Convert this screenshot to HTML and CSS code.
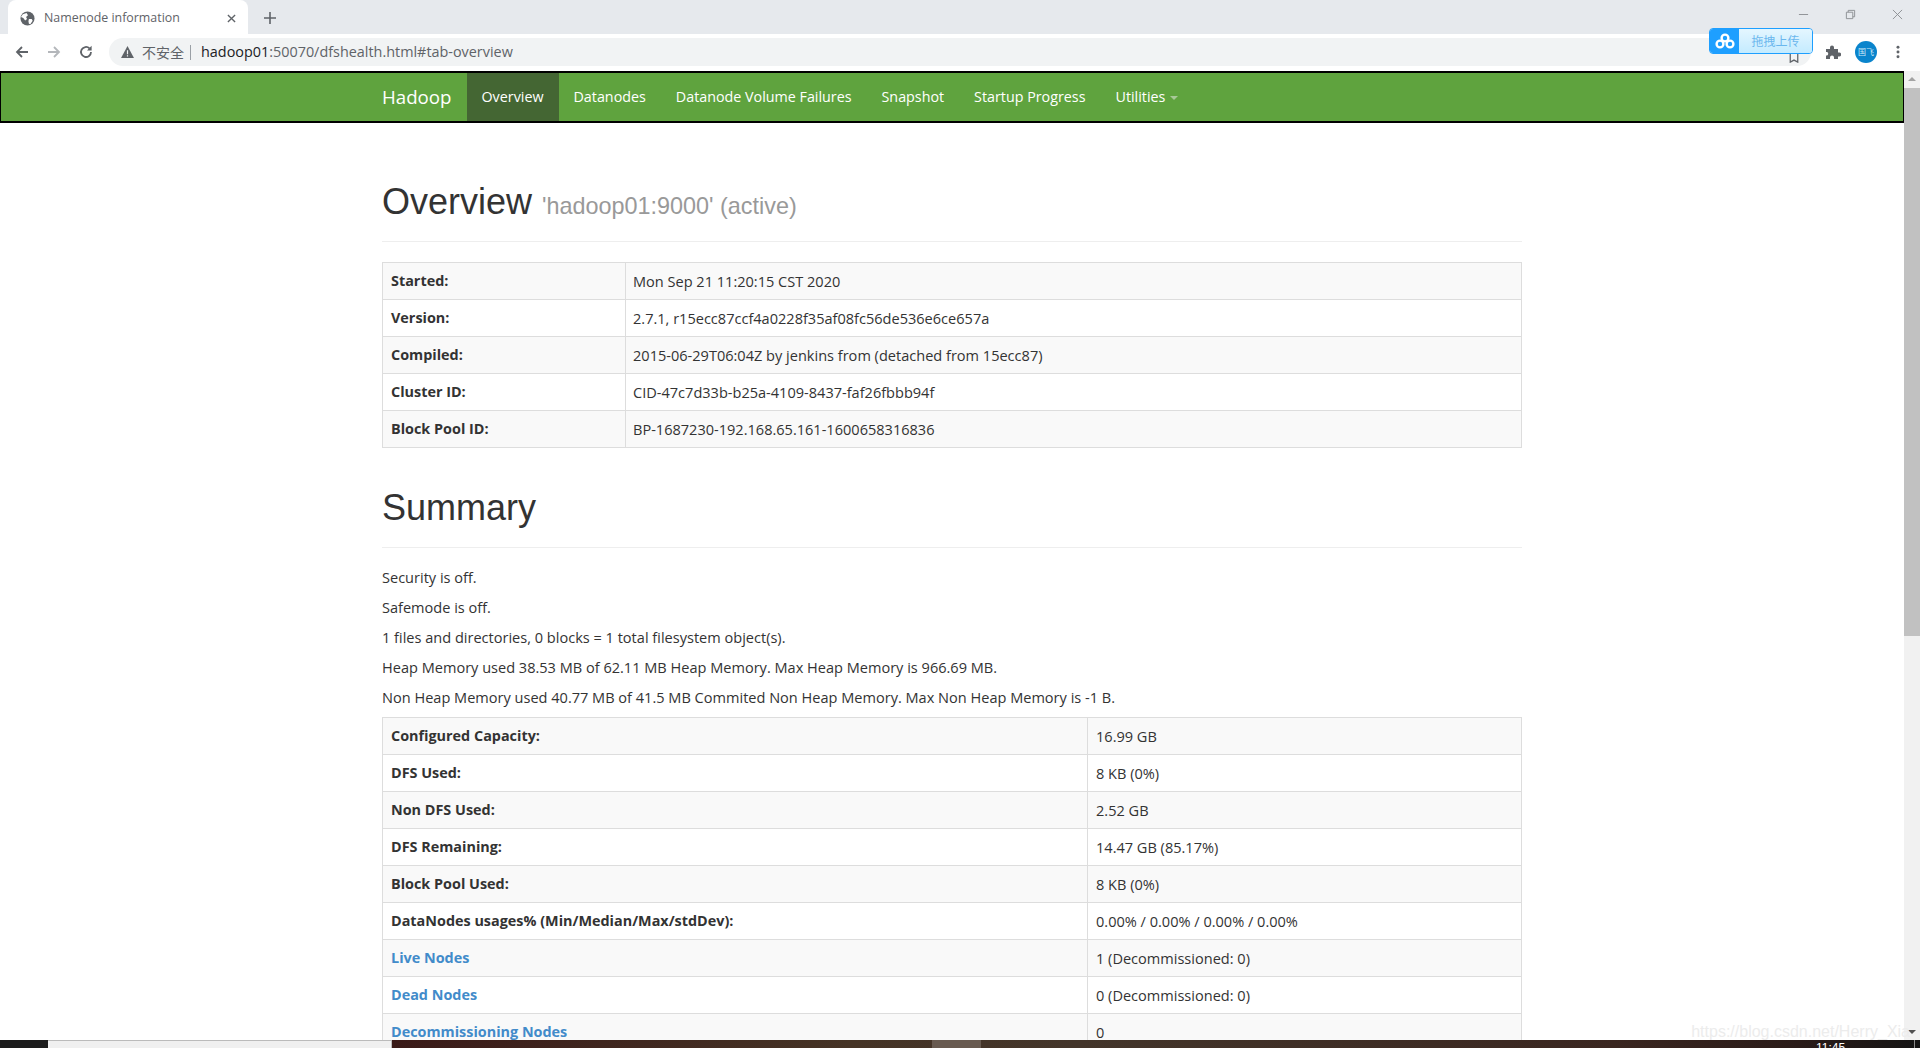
FILE: index.html
```html
<!DOCTYPE html>
<html lang="en">
<head>
<meta charset="utf-8">
<title>Namenode information</title>
<link rel="stylesheet" href="styles.css">
</head>
<body>
<div class="tabstrip">
  <div class="tab">
    <svg class="favicon" viewBox="0 0 16 16"><circle cx="8" cy="8" r="7.5" fill="#5f6368"/><path d="M3 3.5 7 2 8.5 4.5 6.5 6.5 7.5 8.5 5.5 10 3.5 7.5 1 6.5ZM9.5 8.5 12.5 8.5 13.5 10.5 11 14 9.5 13.5 9 11Z" fill="#fff"/></svg>
    <span class="tab-title">Namenode information</span>
    <svg class="tab-close" viewBox="0 0 10 10"><path d="M1 1 9 9M9 1 1 9" stroke="#5f6368" stroke-width="1.5"/></svg>
  </div>
  <svg class="new-tab" viewBox="0 0 12 12"><path d="M6 0V12M0 6H12" stroke="#5f6368" stroke-width="1.6"/></svg>
  <div class="window-controls">
    <svg viewBox="0 0 12 12"><path d="M1 6H11" stroke="#8a8d91" stroke-width="1"/></svg>
    <svg viewBox="0 0 12 12"><path d="M1.5 3.5H8.5V10.5H1.5ZM3.5 3.5V1.5H10.5V8.5H8.5" fill="none" stroke="#8a8d91" stroke-width="1"/></svg>
    <svg viewBox="0 0 12 12"><path d="M1 1 11 11M11 1 1 11" stroke="#8a8d91" stroke-width="1"/></svg>
  </div>
</div>
<div class="toolbar">
  <svg class="nav-icon" viewBox="0 0 16 16"><path d="M14 8H3M8 3 3 8 8 13" fill="none" stroke="#5f6368" stroke-width="1.8"/></svg>
  <svg class="nav-icon" viewBox="0 0 16 16"><path d="M2 8H13M8 3 13 8 8 13" fill="none" stroke="#b4b7bb" stroke-width="1.8"/></svg>
  <svg class="nav-icon" viewBox="0 0 16 16"><path d="M13 8A5 5 0 1 1 11.5 4.4" fill="none" stroke="#5f6368" stroke-width="1.8"/><path d="M13.6 1.8V6.4H9Z" fill="#5f6368"/></svg>
  <div class="omnibox">
    <svg class="warn" viewBox="0 0 14 13"><path d="M7 0 14 13H0Z" fill="#5f6368"/><path d="M7 4.5V9M7 10V11.5" stroke="#f1f3f4" stroke-width="1.3"/></svg>
    <span class="insecure">不安全</span>
    <span class="omni-sep"></span>
    <span class="url"><span class="host">hadoop01</span>:50070/dfshealth.html#tab-overview</span>
  </div>
  <svg class="puzzle" viewBox="0 0 16 16"><path d="M1 5H5V3.5A2 2 0 0 1 9 3.5V5H13V8.5H14.2A2 2 0 0 1 14.2 12.5H13V15H9V13.5A2 2 0 0 0 5 13.5V15H1V11.5H2.2A2 2 0 0 0 2.2 8H1Z" fill="#5f6368"/></svg>
  <div class="avatar">国飞</div>
  <svg class="kebab" viewBox="0 0 4 16"><circle cx="2" cy="2.5" r="1.7" fill="#5f6368"/><circle cx="2" cy="8" r="1.7" fill="#5f6368"/><circle cx="2" cy="13.5" r="1.7" fill="#5f6368"/></svg>
  <svg class="star" viewBox="0 0 12 12"><path d="M1.5 1V11L6 8.5 10.5 11V1" fill="none" stroke="#5f6368" stroke-width="1.5"/></svg>
  <div class="upload-widget">
    <div class="upload-logo">
      <svg viewBox="0 0 20 16"><circle cx="10" cy="5" r="3.4" fill="none" stroke="#fff" stroke-width="2.4"/><circle cx="5" cy="11" r="3.4" fill="none" stroke="#fff" stroke-width="2.4"/><circle cx="15" cy="11" r="3.4" fill="none" stroke="#fff" stroke-width="2.4"/></svg>
    </div>
    <div class="upload-text">拖拽上传</div>
  </div>
</div>
<div class="viewport">
  <main class="page">
    <nav class="navbar">
      <div class="container nav-inner">
        <a class="brand">Hadoop</a>
        <a class="nav-link active">Overview</a>
        <a class="nav-link">Datanodes</a>
        <a class="nav-link">Datanode Volume Failures</a>
        <a class="nav-link">Snapshot</a>
        <a class="nav-link">Startup Progress</a>
        <a class="nav-link">Utilities <span class="caret"></span></a>
      </div>
    </nav>
    <div class="container">
      <div class="page-header first">
        <h1>Overview <small>'hadoop01:9000' (active)</small></h1>
      </div>
      <table class="info info-overview">
        <tr><th>Started:</th><td>Mon Sep 21 11:20:15 CST 2020</td></tr>
        <tr><th>Version:</th><td>2.7.1, r15ecc87ccf4a0228f35af08fc56de536e6ce657a</td></tr>
        <tr><th>Compiled:</th><td>2015-06-29T06:04Z by jenkins from (detached from 15ecc87)</td></tr>
        <tr><th>Cluster ID:</th><td>CID-47c7d33b-b25a-4109-8437-faf26fbbb94f</td></tr>
        <tr><th>Block Pool ID:</th><td>BP-1687230-192.168.65.161-1600658316836</td></tr>
      </table>
      <div class="page-header">
        <h1>Summary</h1>
      </div>
      <p>Security is off.</p>
      <p>Safemode is off.</p>
      <p>1 files and directories, 0 blocks = 1 total filesystem object(s).</p>
      <p>Heap Memory used 38.53 MB of 62.11 MB Heap Memory. Max Heap Memory is 966.69 MB.</p>
      <p>Non Heap Memory used 40.77 MB of 41.5 MB Commited Non Heap Memory. Max Non Heap Memory is -1 B.</p>
      <table class="info info-summary">
        <tr><th>Configured Capacity:</th><td>16.99 GB</td></tr>
        <tr><th>DFS Used:</th><td>8 KB (0%)</td></tr>
        <tr><th>Non DFS Used:</th><td>2.52 GB</td></tr>
        <tr><th>DFS Remaining:</th><td>14.47 GB (85.17%)</td></tr>
        <tr><th>Block Pool Used:</th><td>8 KB (0%)</td></tr>
        <tr><th>DataNodes usages% (Min/Median/Max/stdDev):</th><td>0.00% / 0.00% / 0.00% / 0.00%</td></tr>
        <tr><th><a>Live Nodes</a></th><td>1 (Decommissioned: 0)</td></tr>
        <tr><th><a>Dead Nodes</a></th><td>0 (Decommissioned: 0)</td></tr>
        <tr><th><a>Decommissioning Nodes</a></th><td>0</td></tr>
      </table>
    </div>
  </main>
  <div class="scrollbar">
    <div class="sb-arrow up"></div>
    <div class="sb-thumb"></div>
    <div class="sb-space"></div>
    <div class="sb-arrow down"></div>
  </div>
  <div class="watermark">https://blog.csdn.net/Herry_Xia</div>
</div>
<div class="taskbar">
  <div class="tb-dark"></div>
  <div class="tb-light"></div>
  <div class="tb-wall"><div class="tb-active"></div><span class="tb-clock">11:45</span><div class="tb-edge"></div></div>
</div>
</body>
</html>
```
FILE: styles.css
```css
* { box-sizing: border-box; }
html, body { margin: 0; height: 100%; overflow: hidden; }
body {
  display: flex;
  flex-direction: column;
  height: 1048px;
  background: #fff;
  color: #333;
  font-family: "Open Sans", "Noto Sans", sans-serif;
  font-size: 14.55px;
  line-height: 20px;
}

.tabstrip {
  position: relative;
  flex: none;
  height: 34px;
  display: flex;
  align-items: flex-end;
  padding-left: 8px;
  background: #e6e9ed;
}
.tab {
  display: flex;
  align-items: center;
  width: 240px;
  height: 34px;
  padding: 2px 8px 0 12px;
  background: #fff;
  border-radius: 8px 8px 0 0;
}
.favicon { width: 15px; height: 15px; flex: none; }
.tab-title {
  flex: 1;
  margin-left: 9px;
  font-size: 12.4px;
  color: #5f6368;
  white-space: nowrap;
}
.tab-close { width: 9px; height: 9px; margin-right: 4px; }
.new-tab { width: 12px; height: 12px; margin: 0 0 10px 16px; }
.window-controls {
  position: absolute;
  top: 9px;
  right: 17px;
  display: flex;
  gap: 36px;
}
.window-controls svg { width: 11px; height: 11px; display: block; }

.toolbar {
  position: relative;
  flex: none;
  height: 36px;
  display: flex;
  align-items: center;
  padding: 0 20px 0 14px;
  gap: 16px;
  background: #fff;
}
.nav-icon { width: 16px; height: 16px; flex: none; }
.omnibox {
  display: flex;
  align-items: center;
  flex: 1;
  height: 28px;
  margin-left: -1px;
  margin-right: -2px;
  padding-left: 12px;
  background: #f1f3f4;
  border-radius: 14px;
}
.warn { width: 13px; height: 12px; flex: none; }
.insecure {
  margin-left: 8px;
  font-family: "Noto Sans CJK SC", sans-serif;
  font-size: 14px;
  color: #5f6368;
}
.omni-sep { width: 1px; height: 15px; margin: 0 10px 0 6px; background: #9aa0a6; }
.url { font-size: 14.4px; color: #5f6368; white-space: nowrap; }
.host { color: #202124; }
.puzzle { width: 16px; height: 16px; flex: none; }
.avatar {
  width: 22px;
  height: 22px;
  margin-left: -2px;
  flex: none;
  border-radius: 50%;
  background: #0a84cc;
  color: #cdeaf8;
  font-family: "Noto Sans CJK SC", sans-serif;
  font-size: 8px;
  line-height: 22px;
  text-align: center;
}
.kebab { width: 4px; height: 14px; flex: none; margin-left: 3px; }
.upload-widget {
  position: absolute;
  top: -6px;
  left: 1709px;
  display: flex;
  width: 104px;
  height: 26px;
  border: 1px solid #1e9fff;
  border-radius: 4px;
  overflow: hidden;
}
.upload-logo {
  display: flex;
  align-items: center;
  justify-content: center;
  width: 29px;
  background: #1e9fff;
}
.upload-logo svg { width: 20px; height: 16px; }
.upload-text {
  flex: 1;
  background: linear-gradient(#e4f6ff, #c4ebff);
  color: #6ab7ee;
  font-family: "Noto Sans CJK SC", sans-serif;
  font-size: 12px;
  line-height: 24px;
  text-align: center;
}
.star {
  position: absolute;
  top: 19px;
  left: 1788px;
  width: 12px;
  height: 10px;
}

.viewport {
  position: relative;
  flex: 1;
  min-height: 0;
  display: flex;
  margin-top: 1px;
}
.page {
  flex: 1;
  min-width: 0;
  overflow: hidden;
}
.container { width: 1140px; margin-left: 382px; }

.navbar {
  height: 52px;
  background: #5fa33e;
  border: 1px solid #000;
  border-width: 2px 1px 2px 1px;
}
.nav-inner {
  display: flex;
  height: 48px;
  margin-left: 381px;
  font-size: 14.3px;
}
.nav-inner a { color: #fff; }
.brand {
  padding: 14px 15px 0 0;
  font-size: 18.7px;
  font-weight: 400;
  color: #fff;
  width: 85px;
  flex: none;
}
.nav-link {
  padding: 14px 15px 0;
  color: #fff;
  white-space: nowrap;
}
.nav-link.active { background: #446633; padding-left: 14.5px; }
.caret {
  display: inline-block;
  width: 0;
  height: 0;
  margin-left: 1px;
  vertical-align: middle;
  border-top: 4px solid #a8c898;
  border-left: 4px solid transparent;
  border-right: 4px solid transparent;
}

.page-header {
  margin: 40px 0 20px;
  padding-bottom: 9px;
  border-bottom: 1px solid #eee;
}
.page-header.first { margin-top: 59px; }
h1 {
  margin: 20px 0 10px;
  font-family: "Liberation Sans", Arial, sans-serif;
  font-size: 36px;
  font-weight: 500;
  line-height: 40px;
  color: #333;
}
small {
  font-size: 65%;
  font-weight: 400;
  line-height: 1;
  color: #999;
}
p { margin: 0 0 10px; }
p:first-of-type { margin-top: -1px; }

.info {
  width: 100%;
  border-collapse: collapse;
  table-layout: fixed;
  margin-bottom: 20px;
}
.info th, .info td {
  height: 37px;
  padding: 8px;
  border: 1px solid #ddd;
  text-align: left;
  vertical-align: top;
  white-space: nowrap;
}
.info th { font-weight: 700; font-size: 14.4px; }
.info tr:nth-child(odd) { background: #f9f9f9; }
.info-overview th { width: 243px; }
.info-overview td { padding-left: 7px; }
.info-summary th { width: 705px; }
.info a { color: #428bca; }

.watermark {
  position: absolute;
  right: 10px;
  bottom: -2px;
  font-family: "Liberation Sans", Arial, sans-serif;
  font-size: 16px;
  color: #ececec;
}

.scrollbar {
  flex: none;
  width: 16px;
  display: flex;
  flex-direction: column;
  background: #f1f1f1;
}
.sb-arrow { height: 17px; flex: none; position: relative; }
.sb-arrow::after {
  content: "";
  position: absolute;
  left: 4px;
  border-left: 4px solid transparent;
  border-right: 4px solid transparent;
}
.sb-arrow.up::after { top: 6px; border-bottom: 4px solid #a3a3a3; }
.sb-arrow.down::after { top: 7px; border-top: 4px solid #505050; }
.sb-thumb { height: 548px; flex: none; background: #c1c1c1; }
.sb-space { flex: 1; }

.taskbar {
  flex: none;
  height: 8px;
  display: flex;
  background: #1a1a1a;
}
.tb-dark { width: 48px; background: #1c1c1c; }
.tb-light { width: 344px; background: #f0f0f0; border-top: 1px solid #bbb; border-right: 1px solid #bbb; }
.tb-wall {
  position: relative;
  flex: 1;
  overflow: hidden;
  background: linear-gradient(90deg, #3a1a18 0%, #453325 30%, #43352a 45%, #3a2620 80%, #2a1b18 92%, #141414 100%);
}
.tb-active {
  position: absolute;
  top: 0;
  left: 540px;
  width: 49px;
  height: 8px;
  background: #685a50;
}
.tb-clock {
  position: absolute;
  left: 1424px;
  top: 1px;
  font-family: "Liberation Sans", Arial, sans-serif;
  font-size: 12px;
  line-height: 14px;
  color: #fff;
}
.tb-edge {
  position: absolute;
  top: 0;
  right: 5px;
  width: 1px;
  height: 8px;
  background: #8a8a8a;
}
```
